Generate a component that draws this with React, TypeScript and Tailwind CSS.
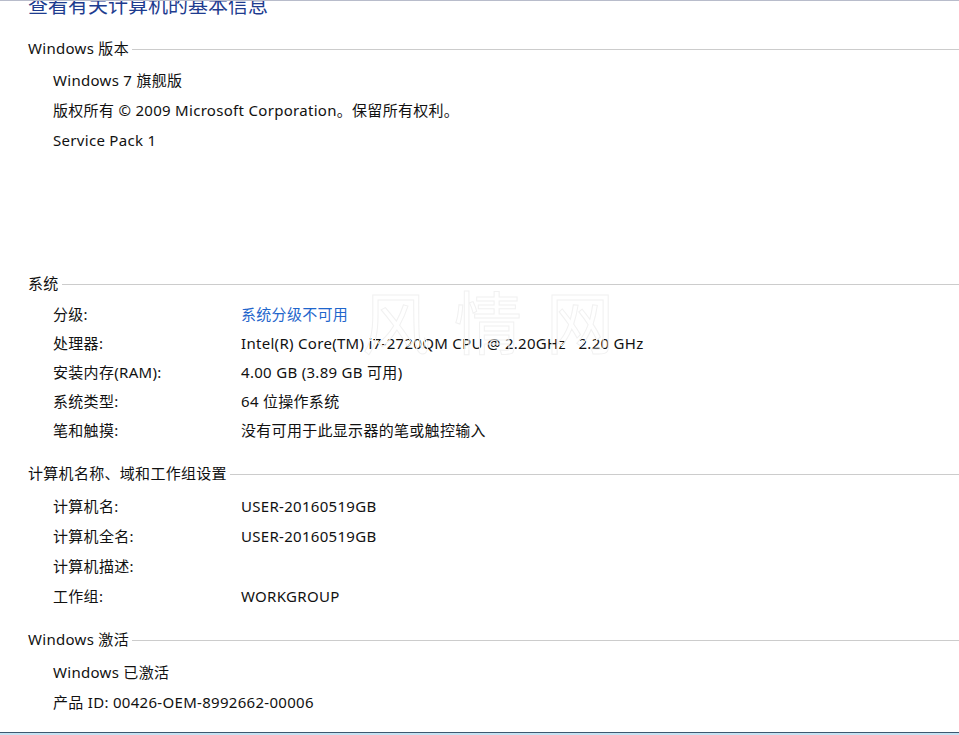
import React from "react";

const font = "font-['Noto_Sans','Noto_Sans_CJK_SC',sans-serif]";

function SectionHeader({ title, className = "" }: { title: string; className?: string }) {
  return (
    <div className={`flex items-center h-[30px] pl-[28px] ${className}`}>
      <span className="text-[15px] text-[#111] whitespace-nowrap leading-none tracking-[0.3px]">{title}</span>
      <div className="flex-1 h-px bg-[#cccccc] ml-[3px] mt-[3px]" />
    </div>
  );
}

function Row({
  label,
  value,
  link = false,
  h = "h-[30px]",
}: {
  label: string;
  value?: string;
  link?: boolean;
  h?: string;
}) {
  return (
    <div className={`flex items-center ${h} pl-[53px] text-[15px] leading-none tracking-[0.3px]`}>
      <span className="w-[188px] text-[#111] whitespace-nowrap">{label}</span>
      {value !== undefined && (
        <span className={`${link ? "text-[#1f66cc]" : "text-[#111]"} whitespace-pre`}>{value}</span>
      )}
    </div>
  );
}

function Line({ text }: { text: string }) {
  return (
    <div className="flex items-center h-[30px] pl-[53px] text-[15px] leading-none tracking-[0.3px] text-[#111] whitespace-pre">
      {text}
    </div>
  );
}

export default function App() {
  return (
    <div className={`relative w-[959px] h-[735px] bg-white overflow-hidden flex flex-col ${font}`}>
      <div className="h-px bg-[#b8bccb]" />
      <div className="h-[32px] overflow-hidden pl-[28px]">
        <div className="text-[20px] leading-none text-[#1e3c8f] -mt-[6px] font-['Noto_Sans_CJK_SC',sans-serif]">查看有关计算机的基本信息</div>
      </div>

      <SectionHeader title="Windows 版本" />
      <div className="mt-[2px]">
        <Line text="Windows 7 旗舰版" />
        <Line text="版权所有 © 2009 Microsoft Corporation。保留所有权利。" />
        <Line text="Service Pack 1" />
      </div>

      <SectionHeader title="系统" className="mt-[113px]" />
      <div className="mt-[2px]">
        <Row h="h-[29px]" label="分级:" value="系统分级不可用" link />
        <Row h="h-[29px]" label="处理器:" value="Intel(R) Core(TM) i7-2720QM CPU @ 2.20GHz   2.20 GHz" />
        <Row h="h-[29px]" label="安装内存(RAM):" value="4.00 GB (3.89 GB 可用)" />
        <Row h="h-[29px]" label="系统类型:" value="64 位操作系统" />
        <Row h="h-[29px]" label="笔和触摸:" value="没有可用于此显示器的笔或触控输入" />
      </div>

      <SectionHeader title="计算机名称、域和工作组设置" className="mt-[13px]" />
      <div className="mt-[3px]">
        <Row label="计算机名:" value="USER-20160519GB" />
        <Row label="计算机全名:" value="USER-20160519GB" />
        <Row label="计算机描述:" />
        <Row label="工作组:" value="WORKGROUP" />
      </div>

      <SectionHeader title="Windows 激活" className="mt-[13px]" />
      <div className="mt-[3px]">
        <Line text="Windows 已激活" />
        <Line text="产品 ID: 00426-OEM-8992662-00006" />
      </div>

      <div className="mt-auto h-[3px] border-t border-[#3d5870] bg-[#c6e2f2]" />

      <div className="absolute left-[362px] top-[286px] text-[68px] leading-none tracking-[24px] text-transparent [-webkit-text-stroke:1px_#f1f1f1] pointer-events-none select-none font-['Noto_Sans_CJK_SC',sans-serif]">
        风情网
      </div>
    </div>
  );
}
